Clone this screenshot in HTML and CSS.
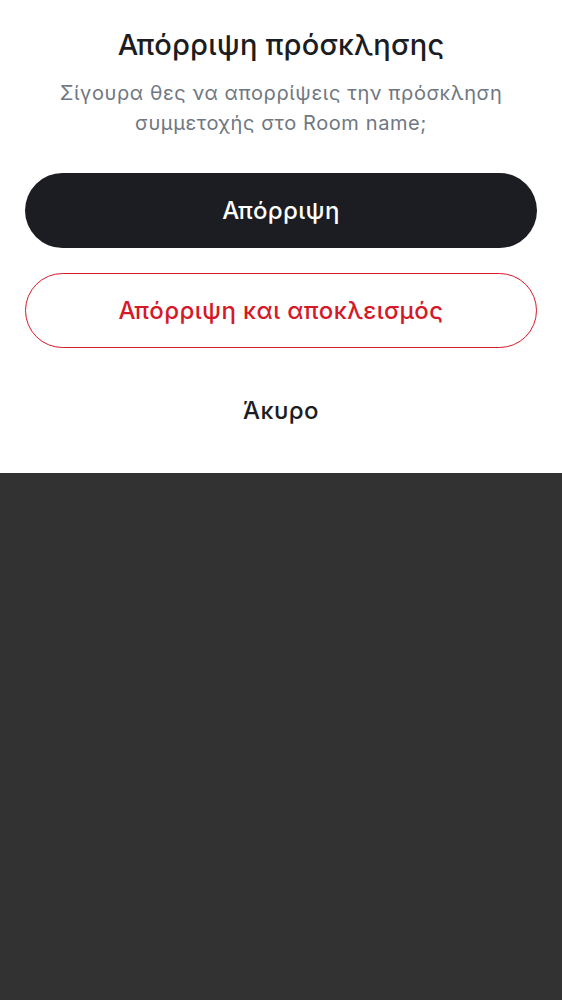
FILE: index.html
```html
<!DOCTYPE html>
<html lang="el">
<head>
<meta charset="utf-8">
<link rel="stylesheet" href="styles.css">
</head>
<body>
<div class="sheet">
  <h1 class="title">Απόρριψη πρόσκλησης</h1>
  <p class="subtitle">Σίγουρα θες να απορρίψεις την πρόσκληση συμμετοχής στο Room name;</p>
  <div class="actions">
    <button class="btn btn-primary">Απόρριψη</button>
    <button class="btn btn-danger">Απόρριψη και αποκλεισμός</button>
    <button class="btn btn-text">Άκυρο</button>
  </div>
</div>
</body>
</html>
```

FILE: styles.css
```css
html, body {
  margin: 0;
  padding: 0;
  height: 100%;
}
body {
  background: #323232;
  font-family: Inter, Roboto, "Noto Sans", sans-serif;
}
.sheet {
  background: #ffffff;
  padding: 24px 25px 0;
  height: 449px;
  display: flex;
  flex-direction: column;
  align-items: stretch;
}
.title {
  margin: 0;
  text-align: center;
  font-size: 29px;
  font-weight: 500;
  line-height: 42px;
  letter-spacing: 0.2px;
  color: #1b1d22;
}
.subtitle {
  margin: 12px 10px 0;
  text-align: center;
  font-size: 20px;
  line-height: 30px;
  letter-spacing: 0.6px;
  color: #6f7782;
}
.actions {
  margin-top: 35px;
  display: flex;
  flex-direction: column;
  gap: 25px;
}
.btn {
  height: 75px;
  border-radius: 38px;
  font-family: inherit;
  font-size: 24px;
  font-weight: 500;
  letter-spacing: 0.4px;
  border: none;
  background: none;
}
.btn-primary {
  background: #1b1d22;
  color: #ffffff;
}
.btn-danger {
  border: 1.5px solid #d51928;
  color: #d51928;
}
.btn-text {
  color: #1b1d22;
}
```
